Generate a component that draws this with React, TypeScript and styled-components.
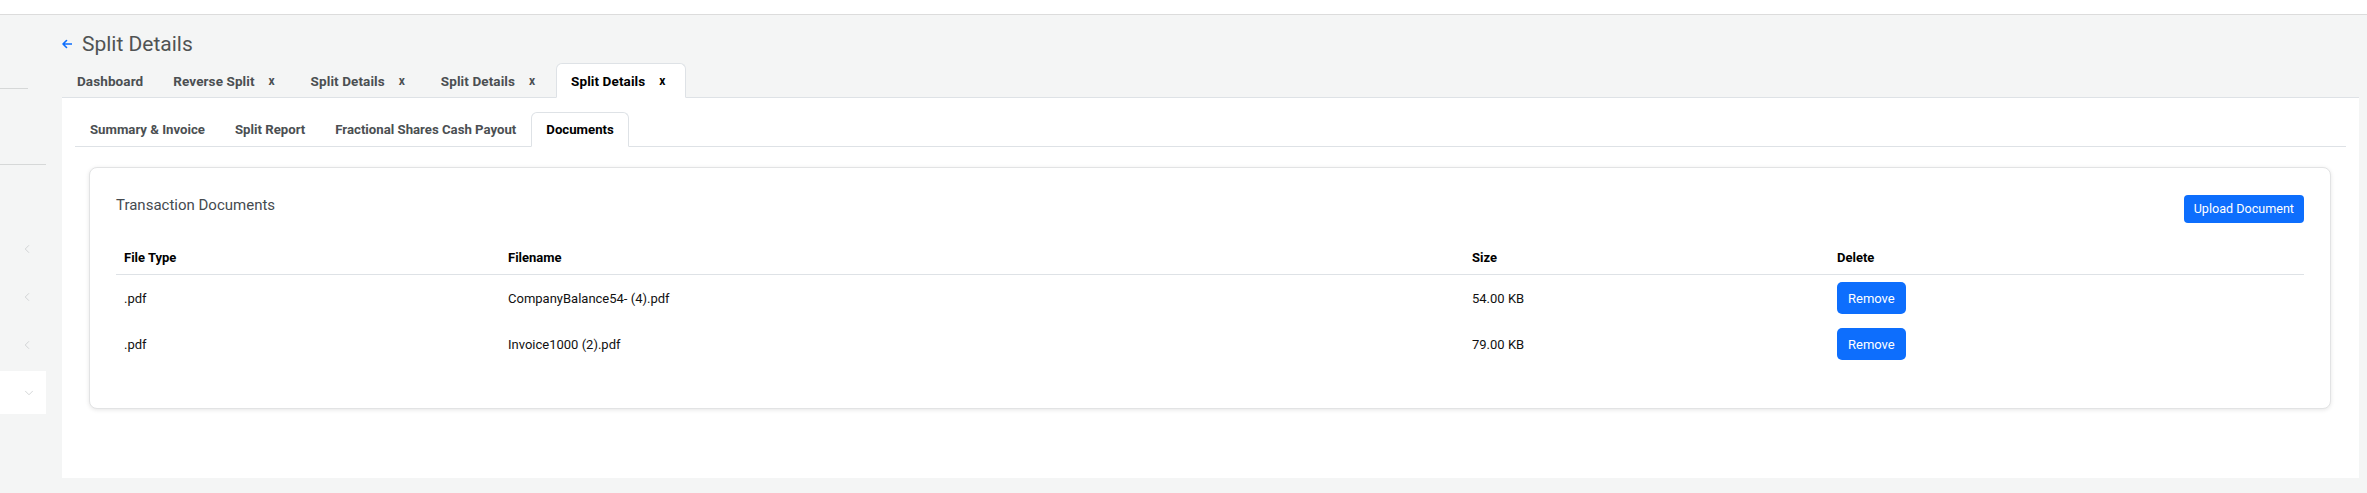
import React from "react";
import styled, { createGlobalStyle } from "styled-components";
import { ChevronLeft, ChevronDown } from "lucide-react";

const GlobalStyle = createGlobalStyle`
  html, body { margin: 0; padding: 0; background: #f4f5f5; }
  body { font-family: Roboto, "Noto Sans", "Liberation Sans", sans-serif; color: #212529; }
  * { box-sizing: border-box; }
`;

const Page = styled.div`
  width: 2367px;
  height: 493px;
  background: #f4f5f5;
  display: flex;
  flex-direction: column;
  overflow: hidden;
`;

const TopBar = styled.div`
  height: 15px;
  background: #ffffff;
  border-bottom: 1px solid #dcdcdc;
  flex: none;
`;

const Body = styled.div`
  display: flex;
  flex: 1;
  gap: 16px;
`;

const Sidebar = styled.aside`
  width: 46px;
  flex: none;
  display: flex;
  flex-direction: column;
`;

const SideSpacer = styled.div<{ $h: number }>`
  height: ${(p) => p.$h}px;
`;

const SideDivider = styled.div<{ $w: number }>`
  width: ${(p) => p.$w}px;
  height: 1px;
  background: #d6d8d8;
`;

const SideItem = styled.div<{ $active?: boolean }>`
  height: ${(p) => (p.$active ? 43 : 48)}px;
  margin-top: ${(p) => (p.$active ? 2 : 0)}px;
  display: flex;
  align-items: center;
  padding-left: ${(p) => (p.$active ? 22 : 20)}px;
  background: ${(p) => (p.$active ? "#ffffff" : "transparent")};
  color: #c3c6c7;
`;

const Main = styled.main`
  flex: 1;
  margin-right: 9px;
  display: flex;
  flex-direction: column;
`;

const TitleRow = styled.div`
  display: flex;
  align-items: center;
  gap: 10px;
  padding-top: 14px;
  height: 44px;
  margin-bottom: 4px;
`;

const BackArrow = styled.svg`
  width: 10px;
  height: 10px;
  flex: none;
`;

const PageTitle = styled.h1`
  margin: 0;
  font-size: 21px;
  line-height: 30px;
  font-weight: 400;
  color: #505354;
`;

const TabBar = styled.div`
  display: flex;
  border-bottom: 1px solid #dee2e6;
  height: 35px;
`;

const Tab = styled.div<{ $active?: boolean; $sub?: boolean }>`
  display: flex;
  align-items: center;
  height: 35px;
  padding: 0 14px;
  margin-bottom: -1px;
  border: 1px solid transparent;
  border-top-left-radius: 6px;
  border-top-right-radius: 6px;
  font-size: ${(p) => (p.$sub ? 13.2 : 13.5)}px;
  letter-spacing: ${(p) => (p.$sub ? 0 : 0.1)}px;
  font-weight: 700;
  color: ${(p) => (p.$active ? "#000000" : "#4b4f52")};
  white-space: nowrap;
  ${(p) =>
    p.$active
      ? `background: #ffffff; border-color: #dee2e6 #dee2e6 #ffffff;`
      : ""}
`;

const Close = styled.span`
  display: inline-block;
  width: 12px;
  margin-left: 14px;
  font-size: 12px;
  font-weight: 700;
  line-height: 1;
`;

const Panel = styled.section`
  background: #ffffff;
  padding: 14px 13px 14px 13px;
  height: 380px;
`;

const Card = styled.div`
  margin: 20px 15px 0 14px;
  background: #ffffff;
  border: 1px solid #e2e3e4;
  border-radius: 8px;
  box-shadow: 0 1px 4px rgba(0, 0, 0, 0.1);
  padding: 26px 26px 26px 26px;
`;

const CardHeader = styled.div`
  display: flex;
  justify-content: space-between;
  align-items: flex-start;
`;

const CardTitle = styled.h5`
  margin: 0;
  font-size: 15px;
  line-height: 22px;
  font-weight: 400;
  color: #454a4f;
`;

const PrimaryButton = styled.button<{ $tall?: boolean }>`
  font-family: inherit;
  background: #0d6efd;
  color: #ffffff;
  border: none;
  border-radius: ${(p) => (p.$tall ? 5 : 4)}px;
  height: ${(p) => (p.$tall ? 32 : 28)}px;
  padding: 0 ${(p) => (p.$tall ? 11 : 10)}px;
  margin-top: ${(p) => (p.$tall ? 0 : 1)}px;
  font-size: ${(p) => (p.$tall ? 13 : 12.6)}px;
  font-weight: 400;
  line-height: 1;
  cursor: pointer;
  display: inline-flex;
  align-items: center;
`;

const Table = styled.table`
  width: 100%;
  border-collapse: collapse;
  margin-top: 19px;
  margin-bottom: 15px;
  table-layout: fixed;
`;

const Th = styled.th<{ $w: number }>`
  width: ${(p) => p.$w}px;
  text-align: left;
  padding: 7px 8px;
  line-height: 18px;
  font-size: 13px;
  font-weight: 700;
  color: #000000;
  border-bottom: 1px solid #dee2e6;
`;

const Td = styled.td`
  padding: 7px 8px;
  height: 46px;
  font-size: 13px;
  color: #111111;
  vertical-align: middle;
`;

const docs = [
  { type: ".pdf", name: "CompanyBalance54- (4).pdf", size: "54.00 KB" },
  { type: ".pdf", name: "Invoice1000 (2).pdf", size: "79.00 KB" },
];

const topTabs = [
  { label: "Dashboard", closable: false },
  { label: "Reverse Split", closable: true },
  { label: "Split Details", closable: true },
  { label: "Split Details", closable: true },
  { label: "Split Details", closable: true, active: true },
];

const subTabs = [
  { label: "Summary & Invoice" },
  { label: "Split Report" },
  { label: "Fractional Shares Cash Payout" },
  { label: "Documents", active: true },
];

export default function App() {
  return (
    <>
      <GlobalStyle />
      <Page>
        <TopBar />
        <Body>
          <Sidebar>
            <SideSpacer $h={73} />
            <SideDivider $w={28} />
            <SideSpacer $h={75} />
            <SideDivider $w={46} />
            <SideSpacer $h={60} />
            <SideItem>
              <ChevronLeft size={14} strokeWidth={1.2} />
            </SideItem>
            <SideItem>
              <ChevronLeft size={14} strokeWidth={1.2} />
            </SideItem>
            <SideItem>
              <ChevronLeft size={14} strokeWidth={1.2} />
            </SideItem>
            <SideItem $active>
              <ChevronDown size={14} strokeWidth={1.2} />
            </SideItem>
          </Sidebar>
          <Main>
            <TitleRow>
              <BackArrow viewBox="0 0 10 10">
                <path
                  d="M4.5 1.5 L1 5 L4.5 8.5 M1 5 H9.5"
                  fill="none"
                  stroke="#0d6efd"
                  strokeWidth="1.6"
                  strokeLinecap="round"
                  strokeLinejoin="round"
                />
              </BackArrow>
              <PageTitle>Split Details</PageTitle>
            </TitleRow>
            <TabBar>
              {topTabs.map((t, i) => (
                <Tab key={i} $active={t.active}>
                  {t.label}
                  {t.closable && <Close>x</Close>}
                </Tab>
              ))}
            </TabBar>
            <Panel>
              <TabBar>
                {subTabs.map((t, i) => (
                  <Tab key={i} $sub $active={t.active}>
                    {t.label}
                  </Tab>
                ))}
              </TabBar>
              <Card>
                <CardHeader>
                  <CardTitle>Transaction Documents</CardTitle>
                  <PrimaryButton>Upload Document</PrimaryButton>
                </CardHeader>
                <Table>
                  <thead>
                    <tr>
                      <Th $w={384}>File Type</Th>
                      <Th $w={964}>Filename</Th>
                      <Th $w={365}>Size</Th>
                      <Th $w={475}>Delete</Th>
                    </tr>
                  </thead>
                  <tbody>
                    {docs.map((d, i) => (
                      <tr key={i}>
                        <Td>{d.type}</Td>
                        <Td>{d.name}</Td>
                        <Td>{d.size}</Td>
                        <Td>
                          <PrimaryButton $tall>Remove</PrimaryButton>
                        </Td>
                      </tr>
                    ))}
                  </tbody>
                </Table>
              </Card>
            </Panel>
          </Main>
        </Body>
      </Page>
    </>
  );
}
